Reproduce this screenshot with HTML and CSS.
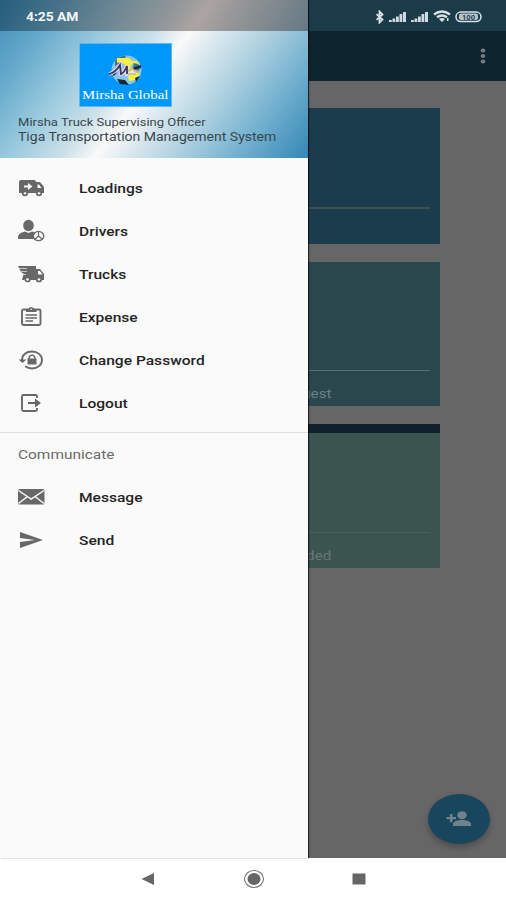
FILE: index.html
```html
<!DOCTYPE html>
<html lang="en">
<head>
<meta charset="utf-8">
<title>Mirsha Global</title>
<link rel="stylesheet" href="styles.css">
</head>
<body>
<div class="phone">
  <div class="screen">
    <div class="status-space"></div>
    <header class="appbar">
      <svg width="6" height="16" viewBox="0 0 6 16"><g fill="#74797c"><ellipse cx="3" cy="2.5" rx="2.4" ry="2"/><ellipse cx="3" cy="8" rx="2.4" ry="2"/><ellipse cx="3" cy="13.500" rx="2.400" ry="2"/></g></svg>
    </header>
    <main class="cards">
      <section class="card card-blue"><hr></section>
      <section class="card card-teal"><hr><p>Request</p></section>
      <section class="card card-green"><hr><p>Loaded</p></section>
    </main>
    <div class="fab">
      <svg width="26" height="18" viewBox="0 0 26 18" fill="#71828c"><path d="M4 4h2.500v3h3.500v2.300H6.500v3H4v-3H.5V7H4z"/><ellipse cx="16" cy="5.200" rx="4.700" ry="4"/><path d="M7 16v-2c0-2.500 5-3.900 9-3.900s9 1.400 9 3.900v2z"/></svg>
    </div>

    <aside class="drawer">
      <div class="profile">
        <div class="logo">
          <svg width="46" height="34" viewBox="0 0 46 34">
            <ellipse cx="23.500" cy="17" rx="15" ry="14.500" fill="#8cc6e6"/>
            <path d="M12 8q6-6 11-5l-3 5-8 5zM31 8l6 5-1 5-6-2z" fill="#3d7486"/>
            <path d="M14 5h12l3 3h5l2 3-6-1-3 4 6 5 4 2-5 6-6 1-1-4 3-5-6-7-4-3-4 1z" fill="#f4ee45"/>
            <path d="M9 19l5-2-1 4-3 2zM14 26l8 1 4 5-9-1zM32 25l5-2-4 6zM29 15l9-3v3l-8 2z" fill="#14283b"/>
            <path d="M6 21q6-1 11-9l1 9q3-1 6-8v8q5-1 9-2" fill="none" stroke="#e9e0f3" stroke-width="3.500"/>
            <path d="M6 21q6-1 11-9l1 9q3-1 6-8v8" fill="none" stroke="#403565" stroke-width="1.900"/>
            <path d="M25 18q5-4 6-1t5 1M25 21h8" fill="none" stroke="#c9bd72" stroke-width="1.300"/>
          </svg>
          <div class="brand"><span>Mirsha Global</span></div>
        </div>
        <p class="role"><span>Mirsha Truck Supervising Officer</span></p>
        <p class="system"><span>Tiga Transportation Management System</span></p>
      </div>
      <nav class="menu">
        <a><svg width="28" height="24" viewBox="0 0 28 24"><path fill="#686868" d="M3 4h13q2 0 2 2h4l4 5v6h-2a3.300 3 0 0 0-6 0H10a3.300 3 0 0 0-6 0H1V6q0-2 2-2z"/><path fill="#fafafa" d="M6 9.500h4V7l4.500 3.500L10 14v-2.500H6zM19.500 8.500h1.500l2.500 3.500h-4z"/><g fill="#fafafa" stroke="#686868" stroke-width="1.700"><ellipse cx="7" cy="17.300" rx="2.300" ry="2"/><ellipse cx="21" cy="17.300" rx="2.300" ry="2"/></g></svg><span>Loadings</span></a>
        <a><svg width="28" height="24" viewBox="0 0 28 24"><ellipse cx="10.500" cy="6.500" rx="5.300" ry="5.700" fill="#686868"/><path fill="#686868" d="M0 20v-2q0-4 7-5.500l3.500 1.500 3.500-1.500 3 .8q-3 3-1 6.700z"/><ellipse cx="20.500" cy="17" rx="5.200" ry="4.600" fill="#fafafa" stroke="#686868" stroke-width="1.400"/><path d="M20.500 17v-4M20.500 17l-3.500 3M20.500 17l3.500 3" stroke="#686868" stroke-width="1.200"/></svg><span>Drivers</span></a>
        <a><svg width="28" height="24" viewBox="0 0 28 24"><path fill="#686868" d="M0 4h18v3h4l4 5v6h-2a3.300 3 0 0 0-6 0h-6a3.300 3 0 0 0-6 0H4l1-4 1-2-3-2-1-2z"/><path d="M1 6.500h8M3 9.500h6M5 12.500h3" stroke="#d0d0d0" stroke-width=".9"/><path fill="#fafafa" d="M20 9h2l2.500 3.500H20z"/><g fill="#fafafa" stroke="#686868" stroke-width="1.700"><ellipse cx="9.500" cy="17.500" rx="2.300" ry="2"/><ellipse cx="21" cy="17.500" rx="2.300" ry="2"/></g></svg><span>Trucks</span></a>
        <a><svg width="28" height="24" viewBox="0 0 28 24"><rect x="4" y="4.500" width="18.500" height="15.500" rx="1.500" fill="none" stroke="#686868" stroke-width="1.900"/><path fill="#686868" d="M8 4h2.500q.5-2 2.700-2t2.800 2h2.500v3H8z"/><circle cx="13.200" cy="4.300" r=".8" fill="#fafafa"/><path d="M7.500 10H19M7.500 13H19M7.500 16h7.500" stroke="#686868" stroke-width="1.600"/></svg><span>Expense</span></a>
        <a><svg width="28" height="24" viewBox="0 0 28 24"><path d="M4 12C4 6.500 8.500 3.500 14 3.500s10 3.500 10 8.500-4.500 8.500-10 8.500c-2.700 0-5-.8-6.800-2.200" fill="none" stroke="#686868" stroke-width="1.900"/><path d="M.5 11.500h8L4.500 15zM9.500 10.500h1V9.500c0-4 7-4 7 0v1h1v6h-9z" fill="#686868"/><path d="M12 10.500v-1c0-2 4-2 4 0v1z" fill="#fafafa"/></svg><span>Change Password</span></a>
        <a><svg width="28" height="24" viewBox="0 0 28 24"><path d="M19 7V5.500Q19 4 17.500 4H5.500Q4 4 4 5.500v13Q4 20 5.500 20h12q1.500 0 1.500-1.500V17" fill="none" stroke="#686868" stroke-width="1.900"/><path d="M10 11h7V7.500l6 4.500-6 4.500V13h-7z" fill="#686868"/></svg><span>Logout</span></a>
      </nav>
      <h2><span>Communicate</span></h2>
      <nav class="menu">
        <a><svg width="28" height="24" viewBox="0 0 28 24"><rect y="4" width="26.500" height="15.500" rx="1.500" fill="#686868"/><path d="M.5 5.500L13.200 14 26 5.500M.5 18.500l9-7M26 18.500l-9-7" fill="none" stroke="#fafafa" stroke-width="1.500"/></svg><span>Message</span></a>
        <a><svg width="28" height="24" viewBox="0 0 28 24"><path fill="#686868" d="M2 4l23 8-23 8v-6l15-2-15-2z"/></svg><span>Send</span></a>
      </nav>
    </aside>

    <div class="status">
      <time><span>4:25 AM</span></time>
      <div class="indicators">
        <svg width="10" height="14" viewBox="0 0 10 14"><path d="M1.500 4.200l6 5.300L4.500 12.500v-11l3 3-6 5.300" fill="none" stroke="#d8e1e5" stroke-width="1.800"/></svg>
        <svg width="18" height="12" viewBox="0 0 18 12"><path d="M0 9h2.800v2H0zM3.500 7.500h2.800V11H3.500zM7 5.500h2.800V11H7zM10.500 3h2.800v8h-2.800zM14 1h3v10h-3z" fill="#d0dae0"/></svg>
        <svg width="18" height="12" viewBox="0 0 18 12"><path d="M0 9h2.800v2H0zM3.500 7.500h2.800V11H3.500zM7 5.500h2.800V11H7zM10.500 3h2.800v8h-2.800zM14 1h3v10h-3z" fill="#d0dae0"/></svg>
        <svg width="18" height="13" viewBox="0 0 18 13"><path d="M1 4.500Q9-1.500 17 4.500M4 7.300q5-3.600 10 0" fill="none" stroke="#d8e1e5" stroke-width="2.300"/><path d="M6 9q3-2 6 0l-3 3zM14 8h1.500v3H14z" fill="#d8e1e5"/></svg>
        <svg width="28" height="12" viewBox="0 0 28 12"><rect x="1" y="1" width="25" height="9.600" rx="4.800" fill="none" stroke="#d8e1e5" stroke-width="1.500"/><rect x="4" y="2.500" width="19" height="6.600" rx="2" fill="#b5c3cb"/><text x="7" y="8.600" textLength="13" lengthAdjust="spacingAndGlyphs">100</text></svg>
      </div>
    </div>
  </div>
  <footer class="navbar">
    <svg width="14" height="14" viewBox="0 0 14 14"><path d="M.5 7L13 1v12z" fill="#666"/></svg>
    <svg width="22" height="20" viewBox="0 0 22 20"><ellipse cx="11" cy="10" rx="9.500" ry="8.500" fill="none" stroke="#777" stroke-width="1.100"/><ellipse cx="11" cy="10" rx="6.500" ry="6" fill="#666"/></svg>
    <svg width="14" height="12" viewBox="0 0 14 12"><path d="M.5.5h13v11H.5z" fill="#666"/></svg>
  </footer>
</div>
</body>
</html>
```
FILE: styles.css
```css
* { box-sizing: border-box; }
body { margin: 0; font-family: Roboto, "Liberation Sans", sans-serif; }
p, h2 { margin: 0; }
svg { display: block; flex: none; }
span { display: inline-block; transform-origin: left center; white-space: nowrap; }
.phone { width: 506px; height: 900px; background: #fff; overflow: hidden; }
.screen { position: relative; height: 858px; background: #666; }
.status-space { height: 31px; background: #1b3b49; }
.appbar { height: 50px; background: #0d232e; display: flex; justify-content: flex-end; align-items: center; padding-right: 20px; }
.cards { padding: 27px 66px 0; display: flex; flex-direction: column; gap: 18px; }
.card { height: 144px; padding: 0 10px; display: flex; flex-direction: column; }
.card hr { width: 100%; height: 1px; margin: 108px 0 0; border: 0; background: #5a7077; flex: none; }
.card p { align-self: flex-end; margin: 15px 99px 0 0; font-size: 12.5px; line-height: 16px; color: #6b8086; transform: scaleX(1.22); transform-origin: right; }
.card-blue { height: 136px; background: #1b3c4c; }
.card-blue hr { height: 2px; margin-top: 99px; background: #3d5055; }
.card-teal { background: #2b474e; }
.card-green { background: #3c544f; border-top: 9px solid #10202d; }
.card-green hr { margin-top: 99px; background: #4b5e5b; }
.card-green p { color: #647975; }
.fab { position: absolute; left: 428px; top: 794px; width: 62px; height: 50px; border-radius: 50%; background: #17465d; box-shadow: 0 4px 6px rgba(0,0,0,.25); display: flex; align-items: center; justify-content: center; }
.drawer { position: absolute; left: 0; top: 0; width: 308px; height: 858px; background: #fafafa; box-shadow: 1px 0 1px rgba(0,0,0,.65); }
.profile { height: 158px; padding: 43px 0 0 18px; background: linear-gradient(127deg, #3d8db6 0%, #65a9cb 15%, #9bcbdf 30%, #cbe0e8 42%, #faf9f9 50%, #dbe9ef 57%, #b1d2e1 68%, #72b0cf 83%, #3487b5 100%); }
.logo { width: 93px; height: 64px; margin-left: 61px; padding-top: 9px; background: #0097fb; border: 1px solid #5eb7ef; display: flex; flex-direction: column; align-items: center; }
.brand { width: 87px; height: 17px; font: 12px/17px "Liberation Serif", serif; color: #fff; }
.brand span { transform: scaleX(1.24); }
.role, .system { height: 15px; line-height: 15px; color: #3a464d; }
.role { margin-top: 8px; font-size: 11px; }
.role span { transform: scaleX(1.185); }
.system { font-size: 12px; }
.system span { transform: scaleX(1.168); }
.menu { display: grid; grid-auto-rows: 43px; }
.menu a { display: flex; align-items: center; gap: 33px; padding-left: 18px; }
.menu span { margin-top: 1px; font-size: 12.5px; font-weight: 500; color: #242424; transform: scaleX(1.245); }
.profile + .menu { padding-top: 8px; height: 274px; }
h2 { height: 43px; border-top: 1px solid #ddd; padding-left: 18px; font-size: 12.5px; line-height: 44px; font-weight: 400; color: #6b6b6b; }
h2 span { transform: scaleX(1.235); }
.status { position: absolute; inset: 0 0 auto; height: 31px; display: flex; align-items: center; justify-content: space-between; padding: 2px 23px 0 26px; }
.status::before { content: ""; position: absolute; left: 0; top: 0; width: 308px; height: 31px; background: linear-gradient(90deg, rgba(5,30,45,.42), rgba(95,80,75,.5) 65%, rgba(70,65,65,.55)); }
.status time { position: relative; font-size: 12px; font-weight: 700; color: #f4f7f8; }
.status time span { transform: scaleX(1.15); }
.indicators { display: flex; align-items: center; gap: 4px; }
.indicators text { font: 700 8px Roboto, sans-serif; fill: #284550; }
.navbar { height: 42px; background: #fff; display: flex; align-items: center; justify-content: space-between; padding: 0 140px 0 141px; }
```
